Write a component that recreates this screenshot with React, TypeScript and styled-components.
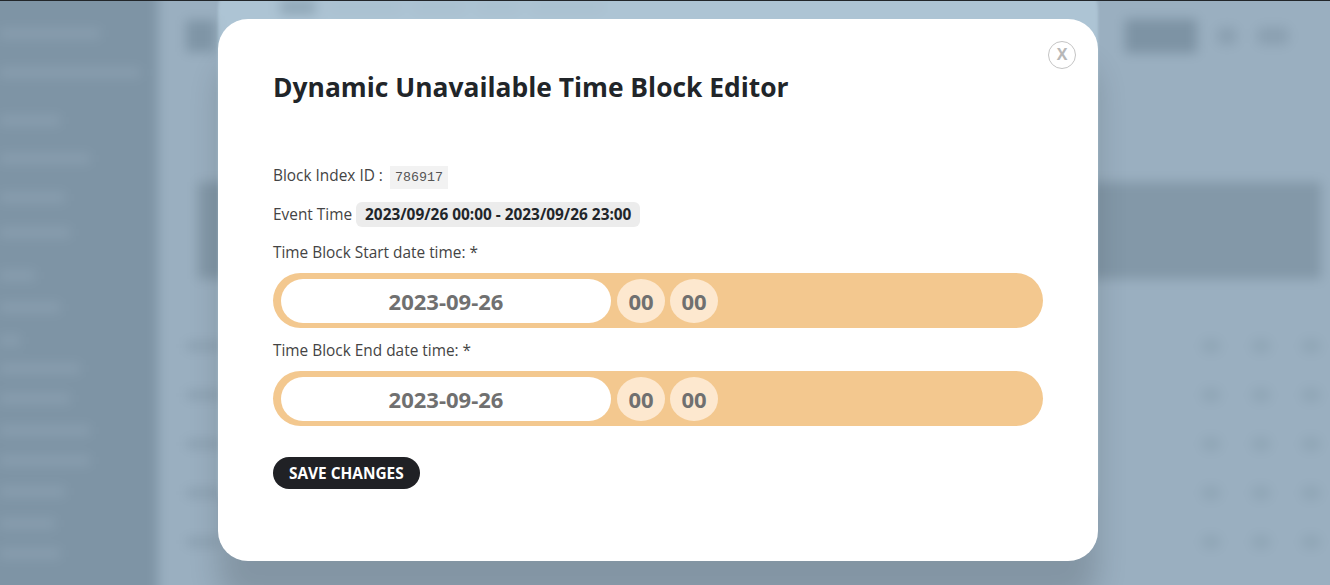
import React from "react";
import styled, { createGlobalStyle } from "styled-components";

const Global = createGlobalStyle`
  html, body { margin: 0; padding: 0; height: 100%; background: #9aafc0; overflow: hidden; }
  * { box-sizing: border-box; }
  body { font-family: "Open Sans", "Noto Sans", sans-serif; color: #333; }
`;

const Shell = styled.div`
  position: relative;
  width: 1330px;
  height: 585px;
  overflow: hidden;
  border-top: 1px solid #22262a;
`;

const BlurredPage = styled.div`
  display: flex;
  width: 1360px;
  height: 620px;
  margin: -15px 0 0 -15px;
  background: #9aafc0;
  filter: blur(6px);
`;

const Sidebar = styled.div`
  width: 173px;
  flex: none;
  background: #7e94a5;
  padding: 43px 0 0 15px;
  display: flex;
  flex-direction: column;
`;

const NavBar = styled.div<{ $w: number; $gap: number }>`
  width: ${(p) => p.$w}px;
  height: 9px;
  margin-bottom: ${(p) => p.$gap}px;
  background: #8a9fb0;
`;

const Main = styled.div`
  flex: 1;
  min-width: 0;
  padding: 16px 56px 0 28px;
  display: flex;
  flex-direction: column;
`;

const Crumbs = styled.div`
  display: flex;
  align-items: center;
  height: 10px;
  gap: 14px;
  margin: 0 0 6px 94px;
`;

const CrumbIcon = styled.div`
  width: 36px;
  height: 16px;
  background: #6f8596;
`;

const CrumbText = styled.div<{ $w: number }>`
  width: ${(p) => p.$w}px;
  height: 6px;
  background: #90a6b6;
`;

const TopBar = styled.div`
  display: flex;
  align-items: center;
  height: 36px;
  gap: 20px;
`;

const BackButton = styled.div`
  width: 30px;
  height: 32px;
  background: #7f95a6;
  margin-right: auto;
`;

const ActionButton = styled.div`
  width: 72px;
  height: 34px;
  background: #7d93a4;
`;

const SmallIcon = styled.div<{ $w: number }>`
  width: ${(p) => p.$w}px;
  height: 18px;
  border-radius: 6px;
  background: #8ba0b1;
`;

const Panel = styled.div`
  margin: 128px -32px 0 12px;
  height: 97px;
  background: #8398a8;
`;

const Rows = styled.div`
  margin: 56px -32px 0 0;
  display: flex;
  flex-direction: column;
  gap: 28px;
`;

const Row = styled.div`
  display: flex;
  align-items: center;
  height: 21px;
`;

const RowLabel = styled.div`
  width: 34px;
  height: 8px;
  background: #8a9fb0;
  margin-right: auto;
`;

const Dot = styled.div`
  width: 20px;
  height: 14px;
  border-radius: 50%;
  background: #8fa5b5;
  margin-left: 30px;
`;

const Overlay = styled.div`
  position: absolute;
  inset: 0;
  padding: 18px 0 0 218px;
`;

const Modal = styled.div`
  position: relative;
  width: 880px;
  height: 542px;
  padding: 49px 55px 0;
  background: #fff;
  border-radius: 30px;
  box-shadow: 0 -40px 3px rgba(208, 235, 249, 0.35), 0 42px 30px rgba(0, 0, 0, 0.15);
`;

const Close = styled.button`
  position: absolute;
  top: 22px;
  right: 22px;
  width: 28px;
  height: 28px;
  padding: 0 0 2px;
  border: 1px solid #c4c4c4;
  border-radius: 50%;
  background: #fff;
  color: #b8b8b8;
  font: 700 16px/24px "Open Sans", sans-serif;
`;

const Title = styled.h2`
  margin: 0 0 60px;
  font-size: 26.4px;
  line-height: 38px;
  font-weight: 700;
  color: #212529;
`;

const Line = styled.div`
  display: flex;
  align-items: center;
  font-size: 15.4px;
  line-height: 20px;
  color: #444;
`;

const IndexLine = styled(Line)`
  align-items: flex-start;
  height: 23px;
  gap: 7px;
  margin-bottom: 13px;
`;

const Code = styled.code`
  padding: 0 5px;
  height: 23px;
  line-height: 23px;
  background: #f2f2f2;
  font-family: "Liberation Mono", monospace;
  font-size: 13.33px;
  color: #555;
`;

const EventLine = styled(Line)`
  height: 25px;
  gap: 4px;
  margin-bottom: 15px;
`;

const Chip = styled.span`
  height: 25px;
  line-height: 25px;
  padding: 0 9px;
  border-radius: 6px;
  background: #ececec;
  font-weight: 700;
  color: #212529;
`;

const FieldLabel = styled(Line)`
  height: 20px;
  padding-top: 2px;
  margin-bottom: 11px;
`;

const Picker = styled.div`
  display: flex;
  align-items: center;
  width: 770px;
  height: 55px;
  padding: 0 8px;
  gap: 5px;
  border-radius: 28px;
  background: #f3c88f;
  margin-bottom: 12px;
  font-size: 22px;
  font-weight: 700;
  color: #707070;
`;

const DateBox = styled.div`
  width: 330px;
  height: 44px;
  margin-right: 1px;
  border-radius: 22px;
  background: #fff;
  line-height: 45px;
  text-align: center;
`;

const TimeBox = styled.div`
  width: 48px;
  height: 44px;
  border-radius: 50%;
  background: #fde8cf;
  line-height: 45px;
  text-align: center;
`;

const Save = styled.button`
  display: block;
  height: 32px;
  margin-top: 31px;
  padding: 2px 16px 0;
  border: none;
  border-radius: 16px;
  background: #202125;
  color: #fff;
  font: 700 15.4px/30px "Open Sans", sans-serif;
  text-transform: uppercase;
`;

const nav: [number, number][] = [
  [100, 30], [140, 39], [60, 29], [90, 30], [65, 26], [70, 34], [35, 23], [60, 24],
  [20, 19], [80, 21], [70, 23], [90, 21], [90, 22], [65, 23], [55, 21], [60, 20],
];

const DateTime = ({ date }: { date: string }) => (
  <Picker>
    <DateBox>{date}</DateBox>
    <TimeBox>00</TimeBox>
    <TimeBox>00</TimeBox>
  </Picker>
);

export default function App() {
  return (
    <Shell>
      <Global />
      <BlurredPage aria-hidden>
        <Sidebar>
          {nav.map(([w, g], i) => (
            <NavBar key={i} $w={w} $gap={g} />
          ))}
        </Sidebar>
        <Main>
          <Crumbs>
            <CrumbIcon />
            <CrumbText $w={70} />
            <CrumbText $w={50} />
            <CrumbText $w={40} />
            <CrumbText $w={70} />
          </Crumbs>
          <TopBar>
            <BackButton />
            <ActionButton />
            <SmallIcon $w={20} />
            <SmallIcon $w={32} />
          </TopBar>
          <Panel />
          <Rows>
            {[0, 1, 2, 3, 4].map((r) => (
              <Row key={r}>
                <RowLabel />
                <Dot />
                <Dot />
                <Dot />
              </Row>
            ))}
          </Rows>
        </Main>
      </BlurredPage>
      <Overlay>
        <Modal>
          <Close>X</Close>
          <Title>Dynamic Unavailable Time Block Editor</Title>
          <IndexLine>
            Block Index ID : <Code>786917</Code>
          </IndexLine>
          <EventLine>
            Event Time <Chip>2023/09/26 00:00 - 2023/09/26 23:00</Chip>
          </EventLine>
          <FieldLabel>Time Block Start date time: *</FieldLabel>
          <DateTime date="2023-09-26" />
          <FieldLabel>Time Block End date time: *</FieldLabel>
          <DateTime date="2023-09-26" />
          <Save>Save Changes</Save>
        </Modal>
      </Overlay>
    </Shell>
  );
}
